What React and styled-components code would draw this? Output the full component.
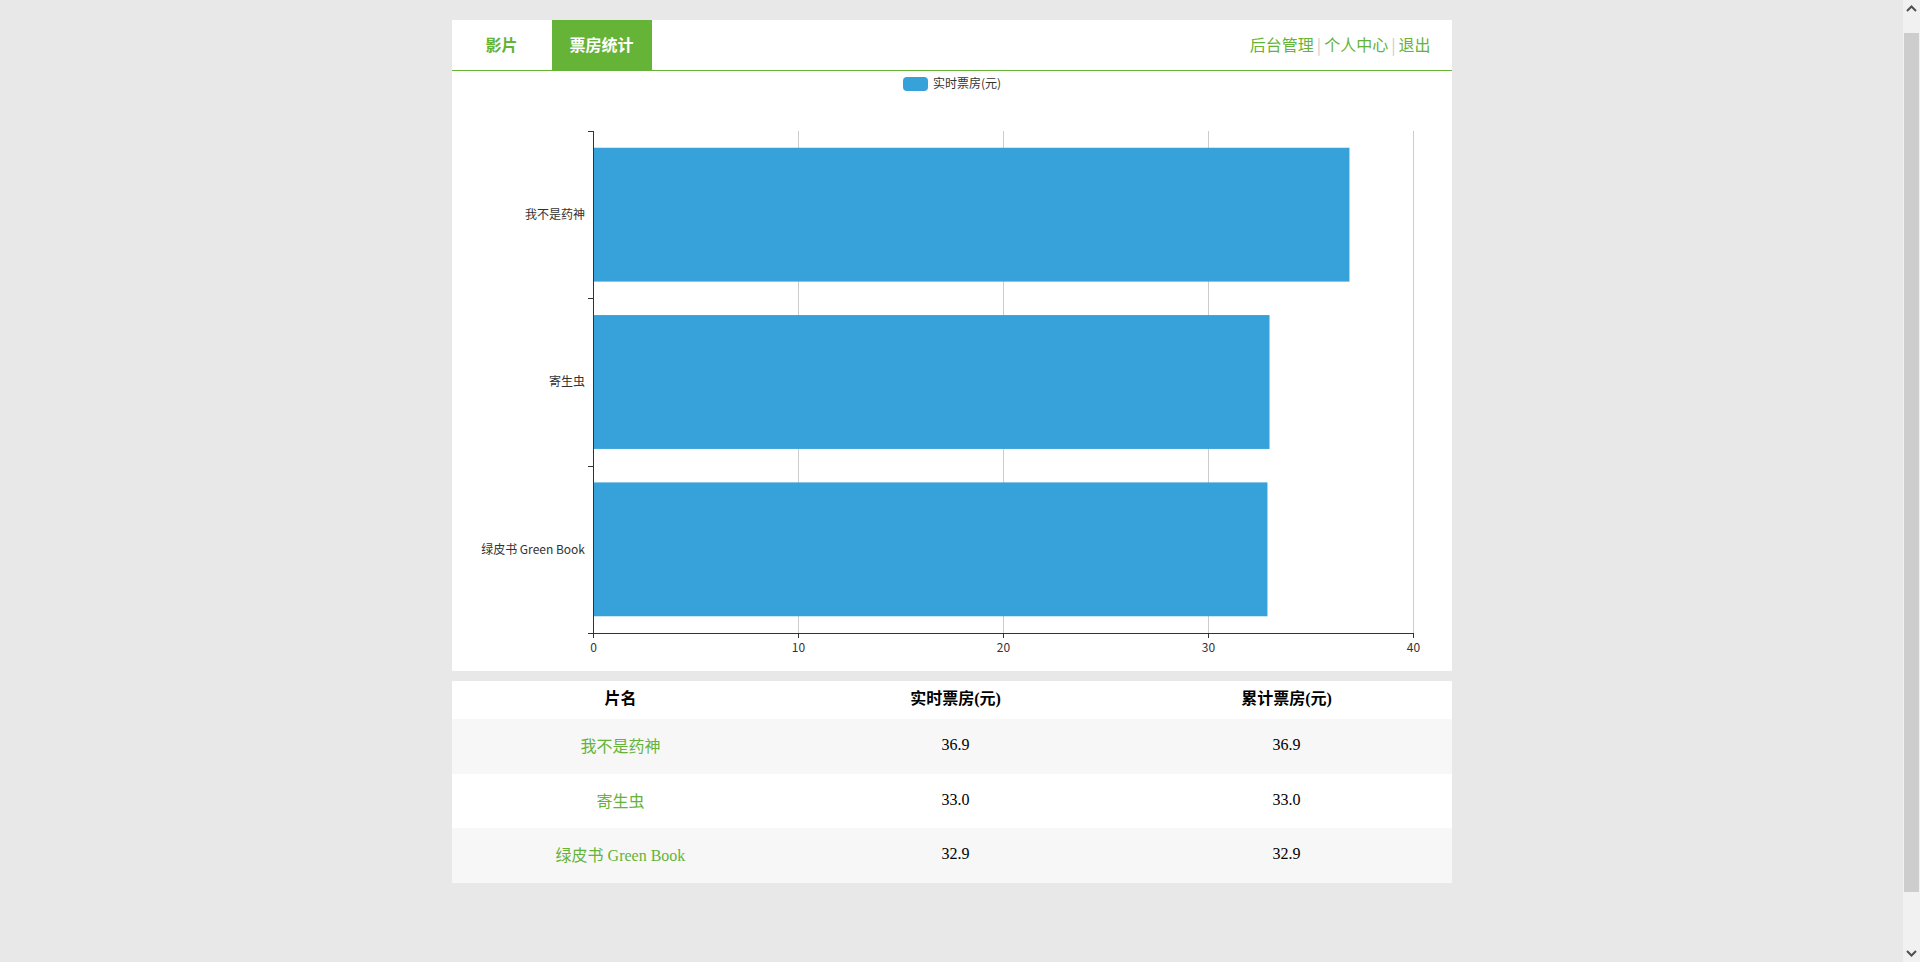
import React from 'react';
import styled, { createGlobalStyle } from 'styled-components';

const GREEN = '#65b337';
const BAR = '#37a2da';

const GlobalStyle = createGlobalStyle`
  html, body {
    margin: 0;
    padding: 0;
    background: #e8e8e8;
  }
  body {
    font-family: "Noto Sans CJK SC", "Noto Sans", sans-serif;
  }
`;

// the page is laid out beside a classic 17px scrollbar
const Page = styled.div`
  padding: 20px 17px 156px 0;
`;

const Container = styled.div`
  width: 1000px;
  margin: 0 auto;
`;

const Header = styled.div`
  height: 50px;
  display: flex;
  align-items: stretch;
  justify-content: space-between;
  background: #fff;
  border-bottom: 1px solid ${GREEN};
`;

const Tabs = styled.div`
  display: flex;
`;

const Tab = styled.a`
  width: 100px;
  box-sizing: border-box;
  padding-bottom: 2px;
  display: flex;
  align-items: center;
  justify-content: center;
  font-size: 16px;
  font-weight: 700;
  text-decoration: none;
  cursor: pointer;
  color: ${(p) => (p.active ? '#fff' : GREEN)};
  background: ${(p) => (p.active ? GREEN : 'transparent')};
`;

const UserNav = styled.div`
  display: flex;
  align-items: center;
  padding: 0 21px 3px 0;
  font-size: 16px;
`;

const NavLink = styled.a`
  color: ${GREEN};
  text-decoration: none;
  cursor: pointer;
`;

const Sep = styled.span`
  color: #ccc;
  margin: 0 3px;
`;

const ChartPanel = styled.div`
  height: 600px;
  background: #fff;
`;

const TablePanel = styled.div`
  margin-top: 10px;
  background: #fff;
`;

const Table = styled.table`
  width: 100%;
  border-collapse: collapse;
  font-family: "Liberation Serif", "Noto Sans CJK SC", serif;
  color: #000;
`;

const Th = styled.th`
  height: 38px;
  padding: 0;
  line-height: 36px;
  font-size: 16px;
  font-weight: 700;
  text-align: center;
  vertical-align: top;
  width: ${(p) => p.w}px;
`;

const Row = styled.tr`
  height: 54.6px;
  background: ${(p) => (p.striped ? '#f7f7f7' : '#fff')};
`;

const Td = styled.td`
  padding: 0 0 2px;
  text-align: center;
  font-size: 16px;
`;

const MovieLink = styled.a`
  color: ${GREEN};
  font-size: 16px;
  text-decoration: none;
  cursor: pointer;
`;

const ChartText = styled.text`
  font-family: "Noto Sans CJK SC", "Noto Sans", sans-serif;
  font-size: 12px;
  fill: #333;
`;

const ScrollTrack = styled.div`
  position: fixed;
  top: 0;
  right: 0;
  width: 17px;
  height: 100vh;
  background: #f1f1f1;
  display: flex;
  flex-direction: column;
  align-items: center;
`;

const ScrollArrow = styled.div`
  height: 17px;
  display: flex;
  align-items: center;
  justify-content: center;
`;

const ScrollThumb = styled.div`
  width: 15px;
  height: 859px;
  margin: 16px 0 auto;
  background: #cdcdcd;
`;

const movies = [
  { name: '我不是药神', now: 36.9, total: 36.9 },
  { name: '寄生虫', now: 33.0, total: 33.0 },
  { name: '绿皮书 Green Book', now: 32.9, total: 32.9 },
];

function Chevron({ up }) {
  return (
    <svg width="11" height="7" viewBox="0 0 11 7">
      <path
        d={up ? 'M1 6 L5.5 1.5 L10 6' : 'M1 1 L5.5 5.5 L10 1'}
        fill="none"
        stroke="#505050"
        strokeWidth="2"
      />
    </svg>
  );
}

function BoxChart() {
  const left = 141;
  const top = 60;
  const bottom = 562;
  const unit = 20.5;
  const band = (bottom - top) / movies.length;
  const ticks = [0, 10, 20, 30, 40];

  return (
    <svg width="1000" height="600" viewBox="0 0 1000 600">
      <rect x="451" y="6" width="25" height="14" rx="4" fill={BAR} />
      <ChartText x="481" y="14" dominantBaseline="middle">实时票房(元)</ChartText>

      {ticks.slice(1).map((t) => (
        <line key={t} x1={left + t * unit + 0.5} x2={left + t * unit + 0.5} y1={top} y2={bottom} stroke="#ccc" />
      ))}

      {movies.map((m, i) => (
        <rect
          key={m.name}
          x={left + 1}
          y={top + i * band + band * 0.1}
          width={m.now * unit - 1}
          height={band * 0.8}
          fill={BAR}
        />
      ))}

      <line x1={left + 0.5} x2={left + 0.5} y1={top} y2={bottom + 0.5} stroke="#333" />
      {[0, 1, 2, 3].map((k) => (
        <line key={k} x1={left - 5} x2={left} y1={Math.round(top + k * band) + 0.5} y2={Math.round(top + k * band) + 0.5} stroke="#333" />
      ))}
      {movies.map((m, i) => (
        <ChartText key={m.name} x={left - 8} y={top + i * band + band / 2 + 1} textAnchor="end" dominantBaseline="middle">
          {m.name}
        </ChartText>
      ))}

      <line x1={left - 5} x2={left + 40 * unit + 1} y1={bottom + 0.5} y2={bottom + 0.5} stroke="#333" />
      {ticks.map((t) => (
        <g key={t}>
          <line x1={left + t * unit + 0.5} x2={left + t * unit + 0.5} y1={bottom} y2={bottom + 5} stroke="#333" />
          <ChartText x={left + t * unit + 0.5} y={bottom + 16} textAnchor="middle" dominantBaseline="middle">
            {t}
          </ChartText>
        </g>
      ))}
    </svg>
  );
}

export default function App() {
  return (
    <>
      <GlobalStyle />
      <Page>
        <Container>
          <Header>
            <Tabs>
              <Tab>影片</Tab>
              <Tab active>票房统计</Tab>
            </Tabs>
            <UserNav>
              <NavLink>后台管理</NavLink>
              <Sep>|</Sep>
              <NavLink>个人中心</NavLink>
              <Sep>|</Sep>
              <NavLink>退出</NavLink>
            </UserNav>
          </Header>
          <ChartPanel>
            <BoxChart />
          </ChartPanel>
          <TablePanel>
            <Table>
              <thead>
                <tr>
                  <Th w={338}>片名</Th>
                  <Th w={332}>实时票房(元)</Th>
                  <Th w={330}>累计票房(元)</Th>
                </tr>
              </thead>
              <tbody>
                {movies.map((m, i) => (
                  <Row key={m.name} striped={i % 2 === 0}>
                    <Td>
                      <MovieLink>{m.name}</MovieLink>
                    </Td>
                    <Td>{m.now.toFixed(1)}</Td>
                    <Td>{m.total.toFixed(1)}</Td>
                  </Row>
                ))}
              </tbody>
            </Table>
          </TablePanel>
        </Container>
      </Page>
      <ScrollTrack>
        <ScrollArrow>
          <Chevron up />
        </ScrollArrow>
        <ScrollThumb />
        <ScrollArrow>
          <Chevron />
        </ScrollArrow>
      </ScrollTrack>
    </>
  );
}
